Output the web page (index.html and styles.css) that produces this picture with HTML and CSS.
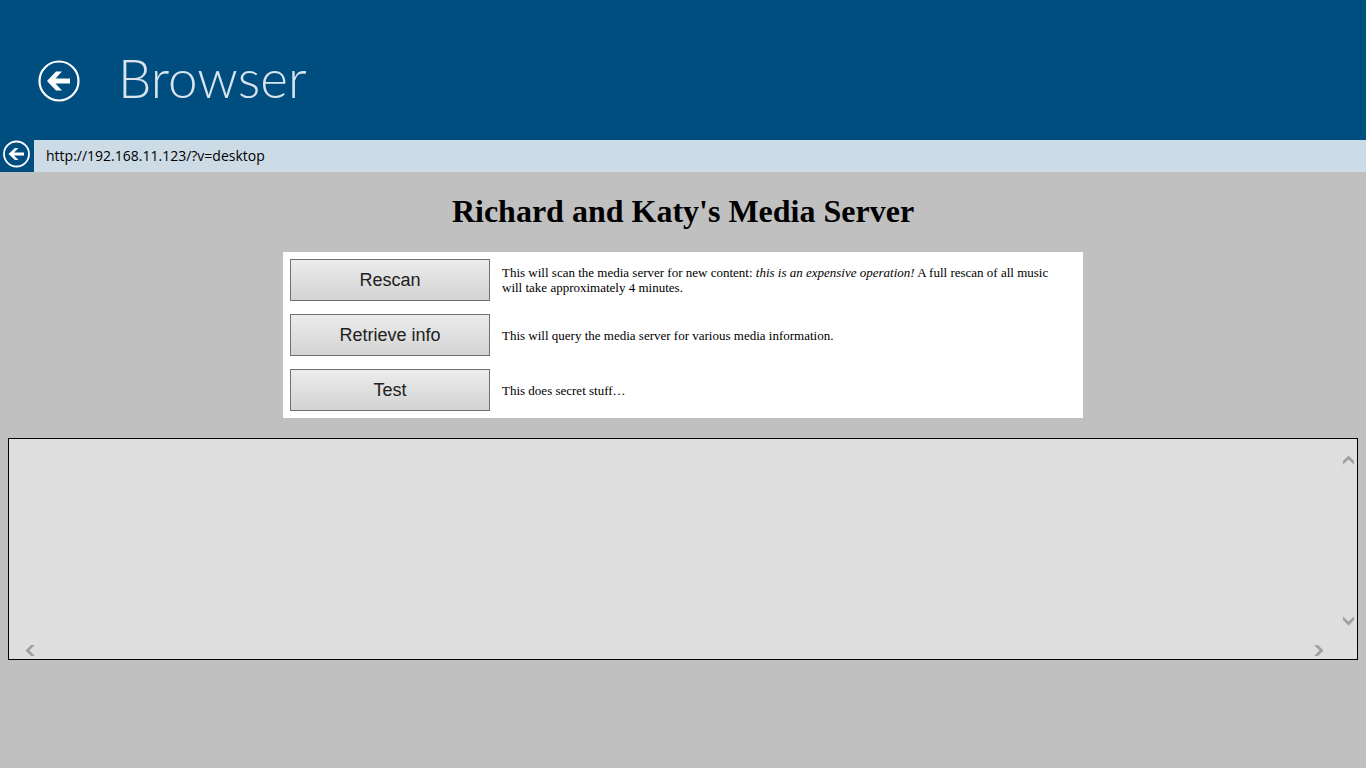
FILE: index.html
```html
<!DOCTYPE html>
<html lang="en">
<head>
<meta charset="utf-8">
<title>Browser</title>
<link rel="stylesheet" href="styles.css">
</head>
<body>
<header class="app-header">
  <button class="back" type="button" aria-label="Back">
    <svg width="42" height="42" viewBox="0 0 42 42" aria-hidden="true"><circle cx="21" cy="21" r="19.5" fill="none" stroke="#fff" stroke-width="2.200"/><path d="M9 21L18 11.500H24L17.500 18.500H32V23.500H17.500L24 30.500H18Z" fill="#fff"/></svg>
  </button>
  <div class="app-title">Browser</div>
</header>
<form class="address-bar">
  <button class="nav-back" type="button" aria-label="Previous page">
    <svg width="28" height="28" viewBox="0 0 28 28" aria-hidden="true"><circle cx="13.500" cy="14" r="12.500" fill="none" stroke="#fff" stroke-width="1.800"/><path d="M5.500 14L12 8H15.500L11 12.500H21V15.500H11L15.500 20H12Z" fill="#fff"/></svg>
  </button>
  <input class="url" type="text" aria-label="Address" value="http://192.168.11.123/?v=desktop">
</form>
<main class="page">
  <h1 class="heading">Richard and Katy's Media Server</h1>
  <section class="actions">
    <button class="action" type="button" aria-describedby="d1">Rescan</button>
    <p class="description" id="d1">This will scan the media server for new content: <em>this is an expensive operation!</em> A full rescan of all music will take approximately 4 minutes.</p>
    <button class="action" type="button" aria-describedby="d2">Retrieve info</button>
    <p class="description" id="d2">This will query the media server for various media information.</p>
    <button class="action" type="button" aria-describedby="d3">Test</button>
    <p class="description" id="d3">This does secret stuff…</p>
  </section>
  <section class="output" aria-label="Output">
    <div class="output-content"></div>
    <div class="scroll-y">
      <button class="arrow" type="button" aria-label="Scroll up"><svg width="12" height="10" viewBox="0 0 12 10"><path d="M0 6L5.500 0.500L11 6V9.500L5.500 4.500L0 9.500Z"/></svg></button>
      <button class="arrow" type="button" aria-label="Scroll down"><svg width="12" height="10" viewBox="0 0 12 10"><path d="M0 4L5.500 9.500L11 4V0.500L5.500 5.500L0 0.500Z"/></svg></button>
    </div>
    <div class="scroll-x">
      <button class="arrow" type="button" aria-label="Scroll left"><svg width="10" height="12" viewBox="0 0 10 12"><path d="M6 0L0.500 5.500L6 11H9.800L4.500 5.500L9.800 0Z"/></svg></button>
      <button class="arrow" type="button" aria-label="Scroll right"><svg width="10" height="12" viewBox="0 0 10 12"><path d="M4 0L9.500 5.500L4 11H0.200L5.500 5.500L0.200 0Z"/></svg></button>
    </div>
  </section>
</main>
</body>
</html>
```

FILE: styles.css
```css
* {
  box-sizing: border-box;
}

body {
  margin: 0;
  min-height: 100vh;
  background: #c0c0c0;
  color: #000;
  font-family: "Liberation Serif", "Times New Roman", serif;
}

button {
  padding: 0;
  border: 0;
  background: none;
}

svg {
  display: block;
}

.app-header {
  display: flex;
  align-items: center;
  gap: 38px;
  height: 140px;
  padding: 22px 38px 0;
  background: #004d80;
}

.app-title {
  padding-bottom: 6px;
  color: #d9e4ec;
  font: 300 53px/64px Lato, "Open Sans", sans-serif;
}

.address-bar {
  display: flex;
  height: 32px;
}

.nav-back {
  width: 34px;
  padding: 0 0 4px 3px;
  background: #004d80;
}

.url {
  flex: 1;
  min-width: 0;
  padding: 0 12px 2px;
  border: 0;
  background: #ccdbe6;
  color: #000;
  font: 14px "Open Sans", "Noto Sans", sans-serif;
}

.page {
  padding: 20px 8px;
}

.heading {
  margin: 0 0 22px;
  font-size: 32px;
  line-height: 38px;
  text-align: center;
}

.actions {
  display: grid;
  grid-template-columns: 200px 1fr;
  gap: 13px 12px;
  align-items: center;
  max-width: 800px;
  margin: 0 auto 20px;
  padding: 7px;
  background: #fff;
}

.action {
  height: 42px;
  border: 1px solid #707070;
  background: linear-gradient(#ececec, #d3d3d3);
  color: #212121;
  font: 18px "Liberation Sans", Arial, sans-serif;
}

.description {
  margin: 0;
  padding-right: 12px;
  font-size: 13px;
  line-height: 15px;
}

.output {
  display: grid;
  grid-template-columns: 1fr 17px;
  grid-template-rows: 203px 17px;
  border: 1px solid #000;
  background: #dfdfdf;
}

.scroll-y,
.scroll-x {
  display: flex;
  align-items: center;
  justify-content: space-between;
  background: #dedede;
}

.scroll-y {
  flex-direction: column;
  padding: 16px 0;
}

.scroll-x {
  padding: 0 16px;
}

.arrow path {
  fill: #a0a0a0;
}
```
